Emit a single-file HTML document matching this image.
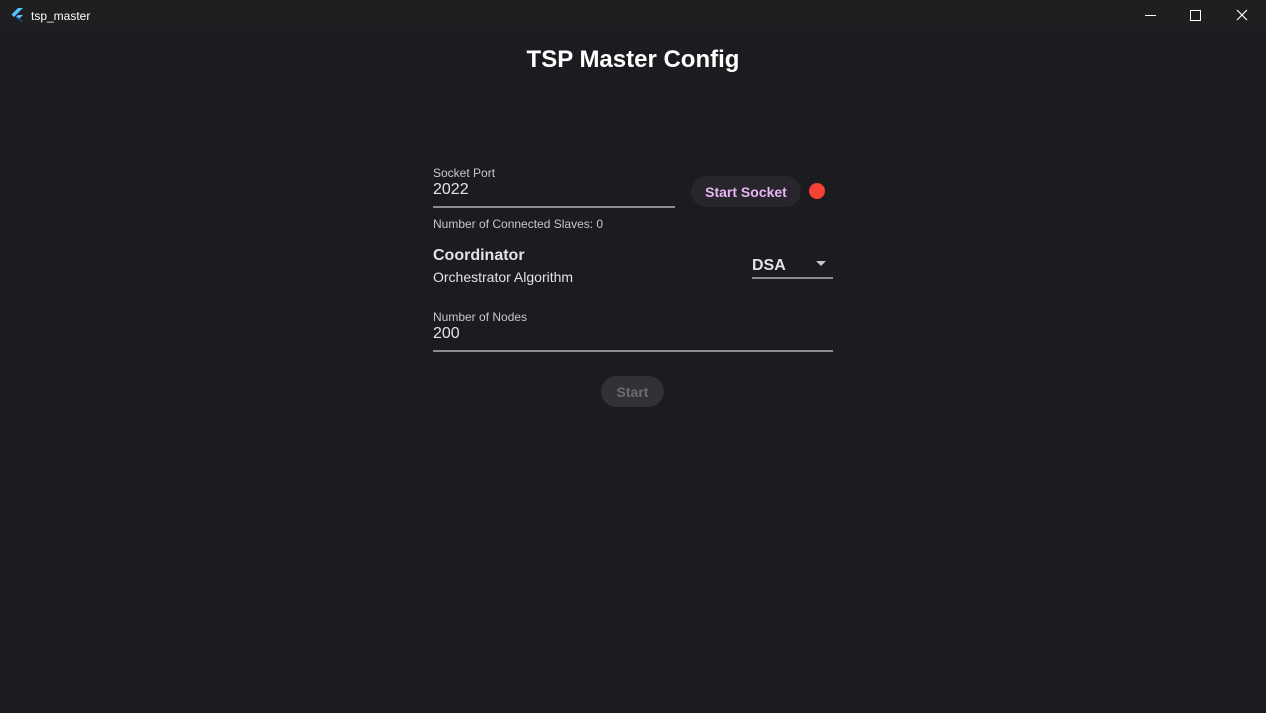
<!DOCTYPE html>
<html><head><style>
html,body{margin:0;padding:0;width:1266px;height:713px;overflow:hidden;background:#1c1b1f;font-family:"Liberation Sans","DejaVu Sans",sans-serif;color:#e6e1e5;position:relative}
.tb{position:absolute;left:0;top:0;width:1266px;height:31px;background:#1f1e21}
.abs{position:absolute;white-space:nowrap}
.line{position:absolute;height:2px;background:#8e8a93}
</style></head><body>
<div class="tb"></div>
<svg class="abs" style="left:9px;top:7px" width="16" height="16" viewBox="0 0 16 16">
<path d="M9 1 L14 1 L5 10 L2.5 7.5Z" fill="#54c5f8"/>
<path d="M9 8 L14 8 L9.5 12.5 L7 10Z" fill="#54c5f8"/>
<path d="M7 10 L9.5 12.5 L12 15 L14 15 L9.5 10.5Z" fill="#01579b"/>
</svg>
<div class="abs" style="left:31px;top:9px;font-size:12px;color:#fff">tsp_master</div>
<div class="abs" style="left:1145px;top:15px;width:11px;height:1px;background:#fff"></div>
<div class="abs" style="left:1190px;top:10px;width:9px;height:9px;border:1px solid #fff"></div>
<svg class="abs" style="left:1236px;top:9px" width="12" height="12"><path d="M1 1L11 11M11 1L1 11" stroke="#fff" stroke-width="1.2"/></svg>

<div class="abs" style="left:0;width:1266px;top:46px;text-align:center;font-size:24px;font-weight:bold;color:#fff">TSP Master Config</div>

<div class="abs" style="left:433px;top:166px;font-size:12px;color:#cac4d0">Socket Port</div>
<div class="abs" style="left:433px;top:181px;font-size:16px">2022</div>
<div class="line" style="left:433px;top:206px;width:242px"></div>
<div class="abs" style="left:691px;top:176px;width:110px;height:31px;border-radius:16px;background:#29252d;color:#e8b6f2;font-size:14px;font-weight:bold;text-align:center;line-height:32px">Start Socket</div>
<div class="abs" style="left:809px;top:183px;width:16px;height:16px;border-radius:50%;background:#f44336"></div>
<div class="abs" style="left:433px;top:217px;font-size:12px;color:#cac4d0">Number of Connected Slaves: 0</div>
<div class="abs" style="left:433px;top:247px;font-size:16px;font-weight:bold">Coordinator</div>
<div class="abs" style="left:433px;top:269px;font-size:14px;color:#e6e1e5">Orchestrator Algorithm</div>
<div class="abs" style="left:752px;top:257px;font-size:16px;font-weight:bold">DSA</div>
<div class="abs" style="left:816px;top:261px;width:0;height:0;border-left:5px solid transparent;border-right:5px solid transparent;border-top:5px solid #cac4d0"></div>
<div class="line" style="left:752px;top:277px;width:81px"></div>
<div class="abs" style="left:433px;top:310px;font-size:12px;color:#cac4d0">Number of Nodes</div>
<div class="abs" style="left:433px;top:325px;font-size:16px">200</div>
<div class="line" style="left:433px;top:350px;width:400px"></div>
<div class="abs" style="left:601px;top:376px;width:63px;height:31px;border-radius:16px;background:#333135;color:#6d6a70;font-size:14px;font-weight:bold;text-align:center;line-height:32px">Start</div>
</body></html>
